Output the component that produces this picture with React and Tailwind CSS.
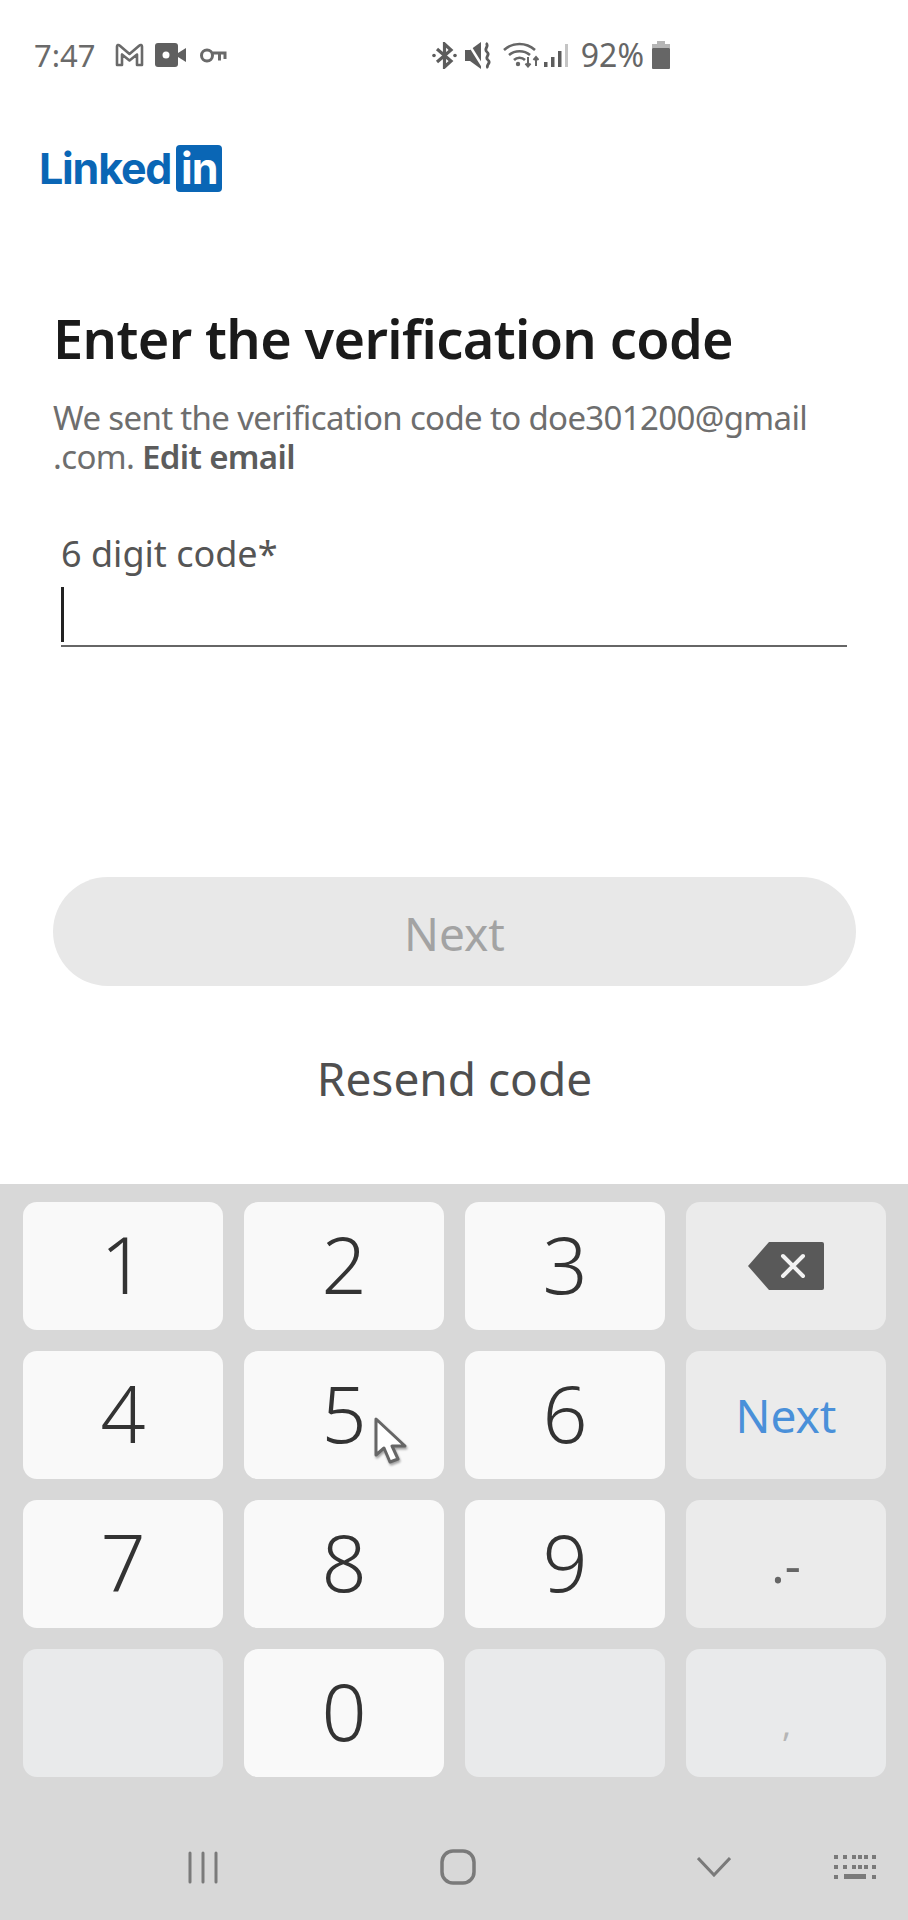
import React from "react";

const font = { fontFamily: '"Noto Sans", sans-serif' };

function StatusLeftIcons() {
  return (
    <div className="flex items-center">
      {/* gmail */}
      <svg width="29" height="24" viewBox="0 0 29 24" className="ml-[19px]" fill="none" stroke="#6a6a6a" strokeWidth="2.600" strokeLinejoin="round">
        <path d="M2 22V3.500c0-1.500 1.500-2 2.600-1L14.500 11l9.900-8.500c1.100-1 2.600-.5 2.600 1V22H22V11.500l-7.500 6-7.500-6V22Z" />
      </svg>
      {/* video */}
      <svg width="31" height="24" viewBox="0 0 31 24" className="ml-[11px]">
        <rect x="0" y="0" width="23" height="24" rx="3" fill="#5f5f5f" />
        <circle cx="11" cy="12" r="3.500" fill="#fff" />
        <path d="M23 10l8-5v14l-8-5Z" fill="#5f5f5f" />
      </svg>
      {/* vpn key */}
      <svg width="27" height="15" viewBox="0 0 27 15" className="ml-[14px]" fill="none" stroke="#6a6a6a" strokeWidth="3">
        <circle cx="7" cy="7.500" r="5.500" />
        <path d="M12.500 5H26.500M19.500 5V12.500M25 5V11" />
      </svg>
    </div>
  );
}

function StatusRightIcons() {
  return (
    <div className="flex items-center">
      {/* bluetooth */}
      <svg width="25" height="27" viewBox="0 0 25 27" fill="none" stroke="#5c5c5c" strokeWidth="3.200">
        <path d="M5 7l14 12-6.500 6V2l6.500 6L5 20" />
        <circle cx="2" cy="13.500" r="1.800" fill="#5c5c5c" stroke="none" />
        <circle cx="23" cy="13.500" r="1.800" fill="#5c5c5c" stroke="none" />
      </svg>
      {/* mute vibrate */}
      <svg width="26" height="29" viewBox="0 0 26 29" className="ml-[8px]">
        <path d="M0 9h5l11-8v27l-11-8H0Z" fill="#5c5c5c" />
        <path d="M3 2l15 24" stroke="#fff" strokeWidth="2.500" />
        <path d="M21 2c4 3-3 6 1 9s-3 5 1 8-3 5 0 8" fill="none" stroke="#5c5c5c" strokeWidth="2.800" />
      </svg>
      {/* wifi */}
      <svg width="36" height="26" viewBox="0 0 36 26" className="ml-[12px]" fill="none" stroke="#666" strokeWidth="2.600">
        <path d="M1 8c9-8 22-8 31 0M6 13c6-5 15-5 21 0M11 18c3-3 8-3 11 0" />
        <circle cx="15" cy="22" r="2.200" fill="#666" stroke="none" />
        <path d="M25 15v9M22.500 21.500l2.500 3 2.500-3M33 24v-9M30.500 18l2.500-3 2.500 3" strokeWidth="2" />
      </svg>
      {/* signal */}
      <svg width="24" height="25" viewBox="0 0 24 25" className="ml-[5px]">
        <rect x="0" y="19" width="3.500" height="5" fill="#5c5c5c" />
        <rect x="7" y="14" width="3.500" height="10" fill="#5c5c5c" />
        <rect x="14" y="8" width="3.500" height="16" fill="#5c5c5c" />
        <rect x="21" y="1" width="3" height="23" fill="#c4c4c4" />
      </svg>
      <span className="ml-[13px] text-[32px] leading-none text-[#666]" style={font}>92%</span>
      {/* battery */}
      <svg width="18" height="28" viewBox="0 0 18 28" className="ml-[8px]">
        <rect x="5" y="0" width="8" height="4" fill="#b5b5b5" />
        <rect x="0" y="3" width="18" height="4" fill="#b5b5b5" />
        <rect x="0" y="7" width="18" height="21" rx="1" fill="#666" />
      </svg>
    </div>
  );
}

function Key({ label, variant = "digit", children }) {
  const bg =
    variant === "digit" ? "bg-[#f9f9f9]" : variant === "blank" ? "bg-[#e9eaeb]" : "bg-[#ebebeb]";
  return (
    <div className={`relative flex h-[128px] items-center justify-center rounded-[14px] ${bg}`}>
      {label && <span className="-mt-[6px] text-[79px] font-light leading-none text-[#333]">{label}</span>}
      {children}
    </div>
  );
}

function Pointer() {
  return (
    <svg width="38" height="50" viewBox="0 0 38 50" className="absolute left-[130px] top-[66px] drop-shadow-[1px_2px_1px_rgba(0,0,0,0.35)]">
      <path
        d="M2 2v36l8-7 6 14 8-3-6-13h13Z"
        fill="#fff"
        stroke="#666"
        strokeWidth="3"
        strokeLinejoin="round"
      />
    </svg>
  );
}

export default function App() {
  return (
    <div className="flex h-[1920px] w-[908px] flex-col overflow-hidden bg-white" style={font}>
      {/* Status bar */}
      <div className="flex h-[110px] shrink-0 items-center justify-between pl-[34px] pr-[238px]">
        <div className="flex items-center">
          <span className="text-[31px] leading-none text-[#6a6a6a]">7:47</span>
          <StatusLeftIcons />
        </div>
        <StatusRightIcons />
      </div>

      {/* Logo */}
      <div className="mt-[35px] flex h-[47px] shrink-0 items-center pl-[39px]" style={{ fontFamily: "Inter, sans-serif" }}>
        <span className="text-[43px] font-bold leading-none tracking-[-1.2px] text-[#0a66b5]">Linked</span>
        <span className="ml-[5px] flex h-[47px] w-[46px] items-center justify-center rounded-[4px] bg-[#0a66b5] text-[43px] font-bold leading-none tracking-[-1px] text-white">
          in
        </span>
      </div>

      {/* Form */}
      <div className="shrink-0 pl-[53px] pr-[52px]">
        <h1 className="mt-[111px] text-[54px] font-semibold leading-[70px] tracking-[-0.6px] text-[#1a1a1a]">
          Enter the verification code
        </h1>
        <p className="mt-[25px] text-[33px] leading-[39px] tracking-[-0.65px] text-[#6e6e6e]">
          We sent the verification code to doe301200@gmail
          <br />
          .com. <span className="font-semibold text-[#5c5c5c]">Edit email</span>
        </p>
        <div className="ml-[8px] mr-[9px] mt-[55px]">
          <label className="block text-[36px] leading-[46px] text-[#555]">6 digit code*</label>
          <div className="mt-[10px] h-[60px] border-b-2 border-[#666]">
            <div className="h-[55px] w-[3px] bg-[#222]" />
          </div>
        </div>
        <button className="mt-[230px] flex h-[109px] w-full items-center justify-center rounded-[55px] bg-[#e8e8e8] pt-[3px] text-[46px] text-[#a3a3a3]">
          Next
        </button>
        <div className="mt-[64px] text-center text-[46px] leading-[56px] text-[#4f4f4f]">Resend code</div>
      </div>

      {/* Keyboard */}
      <div className="mt-auto flex h-[736px] shrink-0 flex-col bg-[#d8d8d8]">
        <div className="grid grid-cols-4 gap-x-[21px] gap-y-[21px] pl-[23px] pr-[22px] pt-[18px]">
          <Key label="1" />
          <Key label="2" />
          <Key label="3" />
          <Key variant="fn">
            <svg width="76" height="48" viewBox="0 0 76 48">
              <path d="M21 0h53a2 2 0 0 1 2 2v44a2 2 0 0 1-2 2H21L0 24Z" fill="#595959" />
              <path d="M35 14l20 20M55 14L35 34" stroke="#f2f2f2" strokeWidth="4" strokeLinecap="round" />
            </svg>
          </Key>
          <Key label="4" />
          <Key label="5">
            <Pointer />
          </Key>
          <Key label="6" />
          <Key variant="fn">
            <span className="text-[46px] leading-none text-[#4a90d9]">Next</span>
          </Key>
          <Key label="7" />
          <Key label="8" />
          <Key label="9" />
          <Key variant="fn">
            <span className="text-[50px] leading-none text-[#666]">.-</span>
          </Key>
          <Key variant="blank" />
          <Key label="0" />
          <Key variant="blank" />
          <Key variant="blank">
            <span className="absolute left-[96px] top-[58px] text-[34px] leading-none text-[#b5b5b5]">,</span>
          </Key>
        </div>

        {/* Nav bar */}
        <div className="relative mt-auto h-[100px]">
          <div className="flex h-full items-center pb-[6px] pl-[188px]">
            <svg width="31" height="33" viewBox="0 0 31 33" stroke="#7a7a7a" strokeWidth="3" strokeLinecap="round">
              <path d="M2 2v29M15 2v29M28 2v29" />
            </svg>
            <svg width="36" height="36" viewBox="0 0 36 36" className="ml-[221px]" fill="none" stroke="#7a7a7a" strokeWidth="3.500">
              <rect x="2" y="2" width="32" height="32" rx="11" />
            </svg>
            <svg width="34" height="20" viewBox="0 0 34 20" className="ml-[221px]" fill="none" stroke="#7a7a7a" strokeWidth="3">
              <path d="M1 1l16 17L33 1" />
            </svg>
            <svg width="42" height="24" viewBox="0 0 42 24" className="ml-[103px]" fill="#7a7a7a">
              <path d="M0 0h4v4H0zM9 0h4v4H9zM18 0h4v4h-4zM24 0h4v4h-4zM30 0h4v4h-4zM38 0h4v4h-4zM0 10h4v4H0zM9 10h4v4H9zM18 10h4v4h-4zM24 10h4v4h-4zM30 10h4v4h-4zM38 10h4v4h-4zM0 20h4v4H0zM10 19h22v5H10zM38 20h4v4h-4z" />
            </svg>
          </div>
        </div>
      </div>
    </div>
  );
}
